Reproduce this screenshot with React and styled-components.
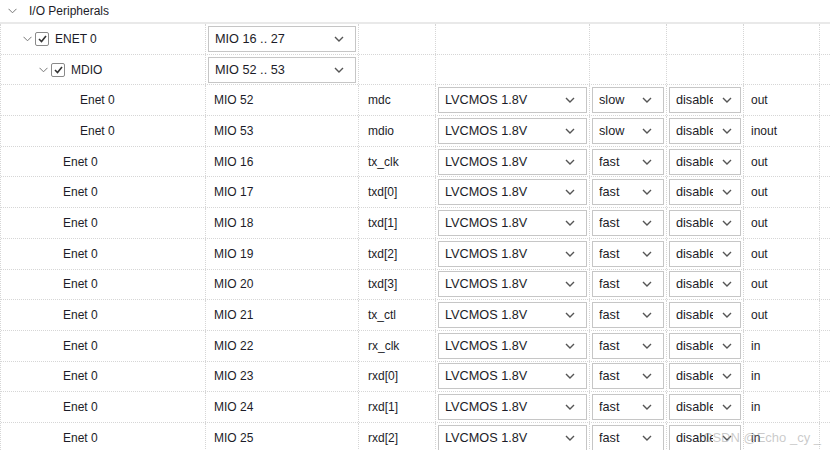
import styled, { createGlobalStyle } from "styled-components";

const GlobalStyle = createGlobalStyle`
  html, body { margin: 0; padding: 0; background: #fff; }
  body { font-family: "Liberation Sans", Arial, sans-serif; font-size: 12px; color: #1c1c28; }
`;

const COLS = "205px 153px 77px 154px 77px 77px 76px 11px";

const mdio = [
  ["MIO 52", "mdc", "slow", "out"],
  ["MIO 53", "mdio", "slow", "inout"],
];

const enet = [
  ["MIO 16", "tx_clk", "out"],
  ["MIO 17", "txd[0]", "out"],
  ["MIO 18", "txd[1]", "out"],
  ["MIO 19", "txd[2]", "out"],
  ["MIO 20", "txd[3]", "out"],
  ["MIO 21", "tx_ctl", "out"],
  ["MIO 22", "rx_clk", "in"],
  ["MIO 23", "rxd[0]", "in"],
  ["MIO 24", "rxd[1]", "in"],
  ["MIO 25", "rxd[2]", "in"],
];

function Chevron() {
  return (
    <ChevronIcon width="10" height="6" viewBox="0 0 10 6">
      <polyline points="1,1 5,5 9,1" fill="none" stroke="#555" strokeWidth="1.4" />
    </ChevronIcon>
  );
}

function Expander() {
  return (
    <svg width="9" height="6" viewBox="0 0 9 6">
      <polyline points="0.5,0.8 4.5,4.8 8.5,0.8" fill="none" stroke="#777" strokeWidth="1" />
    </svg>
  );
}

function CheckBox() {
  return (
    <Box>
      <svg width="9" height="8" viewBox="0 0 9 8">
        <polyline points="1,4 3.5,6.5 8,1" fill="none" stroke="#333" strokeWidth="1.6" />
      </svg>
    </Box>
  );
}

function Select({ value, clip, right = 11 }) {
  return (
    <SelectBox $right={right}>
      <SelectText $clip={clip}>{value}</SelectText>
      <Chevron />
    </SelectBox>
  );
}

function PinRow({ indent, pin, sig, speed, dir }) {
  return (
    <Row>
      <Cell><Label $indent={indent}>Enet 0</Label></Cell>
      <Cell><Label $indent={8}>{pin}</Label></Cell>
      <Cell><Label $indent={9}>{sig}</Label></Cell>
      <Cell $pad={2}><Select value="LVCMOS 1.8V" /></Cell>
      <Cell $pad={2}><Select value={speed} /></Cell>
      <Cell $pad={2}><Select value="disable" clip={37} right={8} /></Cell>
      <Cell><Label $indent={7}>{dir}</Label></Cell>
      <Cell />
    </Row>
  );
}

export default function App() {
  return (
    <Page>
      <GlobalStyle />
      <Header>
        <Expander />
        <HeaderTitle>I/O Peripherals</HeaderTitle>
      </Header>
      <Table>
        <Row>
          <Cell>
            <Tree $indent={22}>
              <Expander />
              <CheckBox />
              <span>ENET 0</span>
            </Tree>
          </Cell>
          <Cell $pad={2}><Select value="MIO 16 .. 27" /></Cell>
          <Cell /><Cell /><Cell /><Cell /><Cell /><Cell />
        </Row>
        <Row>
          <Cell>
            <Tree $indent={38}>
              <Expander />
              <CheckBox />
              <span>MDIO</span>
            </Tree>
          </Cell>
          <Cell $pad={2}><Select value="MIO 52 .. 53" /></Cell>
          <Cell /><Cell /><Cell /><Cell /><Cell /><Cell />
        </Row>
        {mdio.map(([pin, sig, speed, dir]) => (
          <PinRow key={pin} indent={79} pin={pin} sig={sig} speed={speed} dir={dir} />
        ))}
        {enet.map(([pin, sig, dir]) => (
          <PinRow key={pin} indent={62} pin={pin} sig={sig} speed="fast" dir={dir} />
        ))}
      </Table>
      <Watermark>CSDN @Echo _cy _</Watermark>
    </Page>
  );
}

const Page = styled.div`
  position: relative;
  width: 830px;
  height: 450px;
  overflow: hidden;
  background: #fff;
`;

const Header = styled.div`
  height: 22px;
  display: flex;
  align-items: center;
  padding-left: 8px;
  gap: 12px;
  border-bottom: 2px solid #e9e9e9;
`;

const HeaderTitle = styled.span`
  font-size: 12px;
  color: #1c1c28;
`;

const Table = styled.div`
  display: flex;
  flex-direction: column;
  border-left: 1px dotted #d6d6d6;
`;

const Row = styled.div`
  display: grid;
  grid-template-columns: ${COLS};
  height: 30.7px;
  box-sizing: border-box;
  border-bottom: 1px dotted #d6d6d6;
`;

const Cell = styled.div`
  display: flex;
  align-items: center;
  box-sizing: border-box;
  border-right: 1px dotted #d6d6d6;
  padding: 0 ${(p) => p.$pad || 0}px;
  min-width: 0;
`;

const Tree = styled.div`
  display: flex;
  align-items: center;
  padding-left: ${(p) => p.$indent}px;
  gap: 3px;
  font-size: 12px;
  span { margin-left: 3px; }
`;

const Box = styled.div`
  width: 12px;
  height: 12px;
  border: 1px solid #8a8a8a;
  border-radius: 2px;
  display: flex;
  align-items: center;
  justify-content: center;
  background: #fff;
`;

const Label = styled.span`
  padding-left: ${(p) => p.$indent}px;
  white-space: nowrap;
`;

const SelectBox = styled.div`
  flex: 1;
  height: 26px;
  box-sizing: border-box;
  border: 1px solid #c6c6c6;
  background: #fff;
  display: flex;
  align-items: center;
  padding: 0 ${(p) => p.$right}px 0 6px;
  gap: 4px;
  min-width: 0;
`;

const SelectText = styled.span`
  flex: 1;
  overflow: hidden;
  white-space: nowrap;
  min-width: 0;
  font-size: 12.7px;
  ${(p) => p.$clip && `max-width: ${p.$clip}px; flex: 0 0 ${p.$clip}px; margin-right: auto;`}
`;

const ChevronIcon = styled.svg`
  flex-shrink: 0;
`;

const Watermark = styled.div`
  position: absolute;
  right: 9px;
  bottom: 5px;
  font-size: 13px;
  color: rgba(150, 150, 150, 0.5);
`;
